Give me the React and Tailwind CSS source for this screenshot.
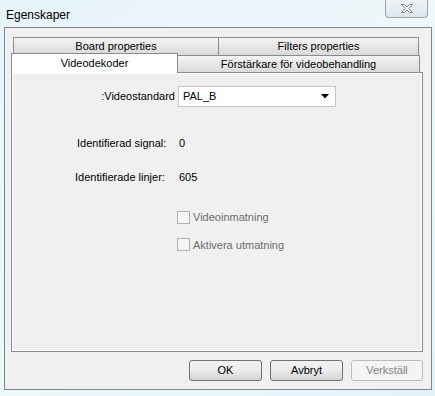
import React from "react"

const font = { fontFamily: '"Liberation Sans", Arial, sans-serif' }

function Tab({ label, className = "" }) {
  return (
    <div
      className={
        "flex items-center justify-center border border-[#898c95] bg-gradient-to-b from-[#f4f4f4] to-[#d9d9d9] text-[11px] text-black " +
        className
      }
    >
      {label}
    </div>
  )
}

function Button({ label, disabled }) {
  return (
    <button
      className={
        disabled
          ? "w-[72px] h-[21px] rounded-[3px] border border-[#b8bcbf] bg-[#f4f4f4] text-[11px] text-[#838383]"
          : "w-[73px] h-[21px] rounded-[3px] border border-[#707070] bg-gradient-to-b from-[#f2f2f2] via-[#ebebeb] to-[#d3d3d3] text-[11px] text-black"
      }
    >
      {label}
    </button>
  )
}

function Checkbox({ label }) {
  return (
    <div className="flex items-center gap-[3px]">
      <div className="w-[13px] h-[13px] border border-[#b1b1b1] bg-[#f4f4f4]"></div>
      <span className="text-[11px] text-[#6d6d6d]">{label}</span>
    </div>
  )
}

export default function App() {
  return (
    <div
      className="w-[435px] h-[396px] overflow-hidden bg-gradient-to-br from-[#e6f3f8] via-[#eef8fb] to-[#e2f4f8] flex flex-col"
      style={font}
    >
      {/* title bar */}
      <div className="h-[27px] flex justify-between">
        <div className="pl-[6px] pt-[6px] text-[12px] text-black">Egenskaper</div>
        <div className="mr-[7px] w-[43px] h-[18px] rounded-b-[4px] border border-t-0 border-[#9aa6ae] bg-gradient-to-b from-[#eef3f6] to-[#dfe7ec] flex items-center justify-center">
          <svg width="14" height="11" viewBox="0 0 14 11">
            <path
              d="M1.5 1.5 H4.5 L7 4 L9.5 1.5 H12.5 L8.5 5.5 L12.5 9.5 H9.5 L7 7 L4.5 9.5 H1.5 L5.5 5.5 Z"
              fill="#ffffff"
              stroke="#7d8791"
              strokeWidth="1"
            />
          </svg>
        </div>
      </div>

      {/* client area */}
      <div className="ml-[4px] w-[428px] h-[363px] border border-[#858585] bg-[#f0f0f0] pl-[6px] pt-[9px] flex flex-col">
        {/* tab row 1 */}
        <div className="ml-[2px] flex h-[19px]">
          <Tab label="Board properties" className="w-[206px]" />
          <Tab label="Filters properties" className="w-[201px] -ml-px" />
        </div>
        {/* tab row 2 */}
        <div className="flex h-[17px] -mt-px">
          <div className="relative z-10 -mt-[2px] w-[167px] h-[20px] border border-b-0 border-[#898c95] bg-white flex items-center justify-center text-[11px] text-black">
            Videodekoder
          </div>
          <Tab label="Förstärkare för videobehandling" className="w-[243px] -ml-px h-[18px] border-b-0" />
        </div>
        {/* panel */}
        <div className="w-[412px] h-[280px] border border-[#898c95] bg-[#f0f0f0] shadow-[inset_1px_1px_0_#ffffff,inset_-1px_-1px_0_#ffffff] pt-[13px] flex flex-col text-[11px] text-black">
          <div className="flex items-center h-[21px]">
            <div className="w-[166px] text-right pr-[3px]">:Videostandard</div>
            <div className="w-[158px] h-[21px] border border-[#c5c5c5] bg-white flex items-center justify-between pl-[4px] pr-[6px]">
              <span>PAL_B</span>
              <svg width="8" height="5" viewBox="0 0 8 5">
                <path d="M0 0 H8 L4 4.5 Z" fill="#000" />
              </svg>
            </div>
          </div>
          <div className="flex mt-[28px]">
            <div className="w-[167px] pl-[65px]">Identifierad signal:</div>
            <div>0</div>
          </div>
          <div className="flex mt-[17px]">
            <div className="w-[167px] pl-[63px]">Identifierade linjer:</div>
            <div>605</div>
          </div>
          <div className="ml-[165px] mt-[24px] flex flex-col gap-[11px]">
            <Checkbox label="Videoinmatning" />
            <Checkbox label="Aktivera utmatning" />
          </div>
        </div>
        {/* buttons */}
        <div className="flex justify-end gap-[8px] mt-[8px] pr-[8px]">
          <Button label="OK" />
          <Button label="Avbryt" />
          <Button label="Verkställ" disabled />
        </div>
      </div>
    </div>
  )
}
